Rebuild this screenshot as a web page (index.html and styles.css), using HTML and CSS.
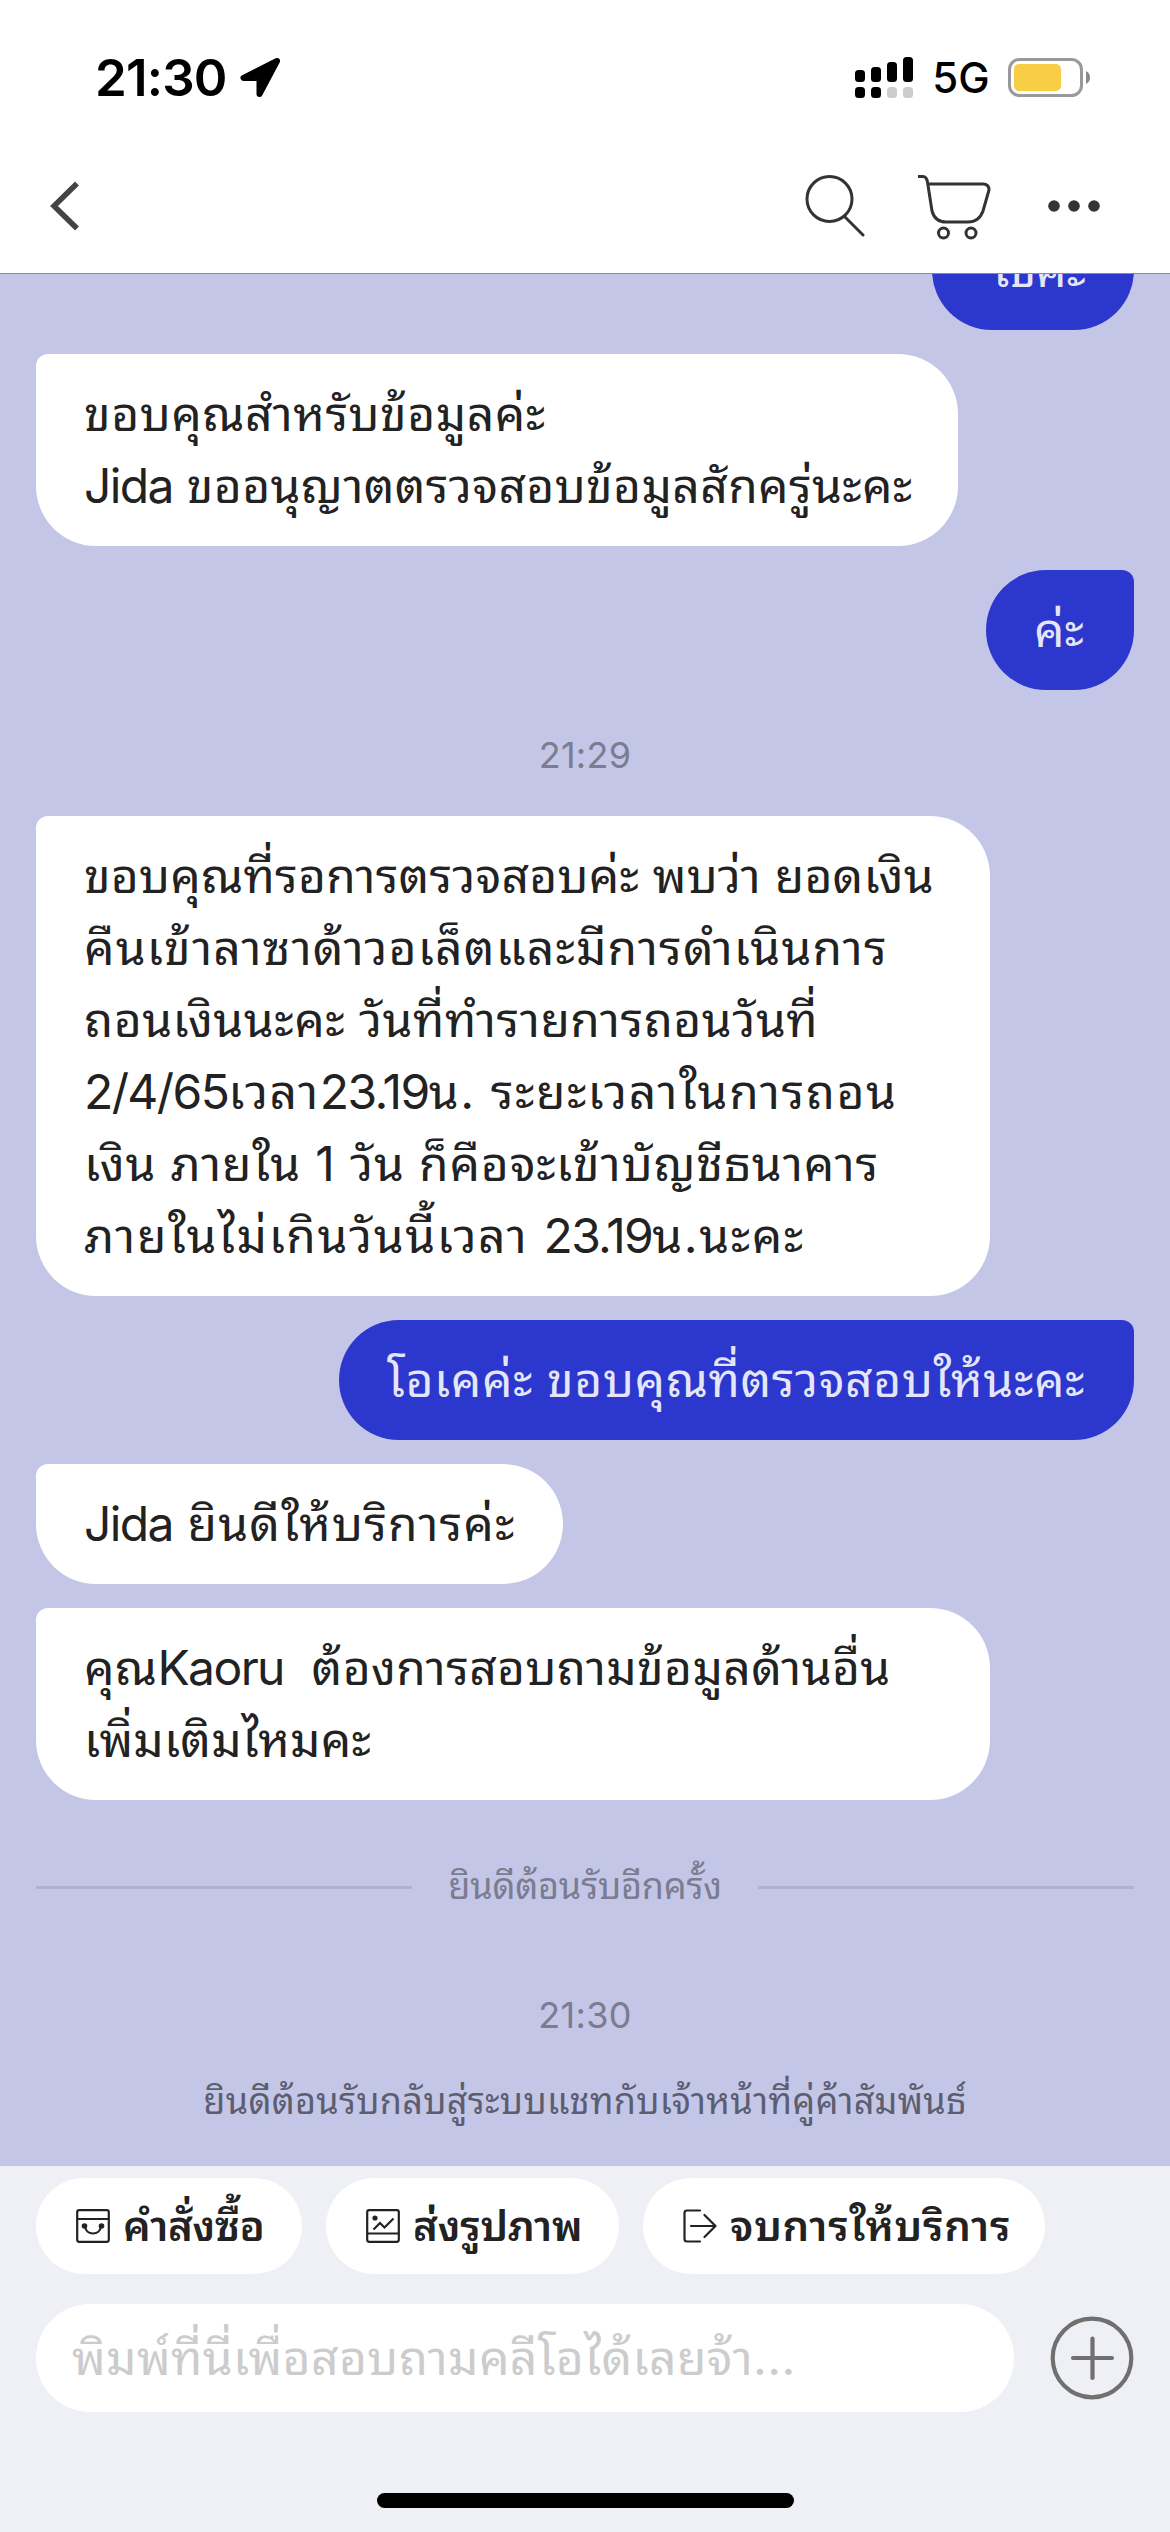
FILE: index.html
```html
<!DOCTYPE html>
<html lang="th">
<head>
<meta charset="utf-8">
<title>Chat</title>
<link rel="stylesheet" href="styles.css">
</head>
<body>
<header class="top">
  <div class="status">
    <span class="clock">21:30</span>
    <svg class="loc" width="40" height="40" viewBox="0 0 40 40"><path d="M37 3 3.500 20H19.500V36Z" stroke="#000" stroke-width="6" stroke-linejoin="round"/></svg>
    <svg class="signal" width="58" height="42" viewBox="0 0 58 42"><rect y="13" width="10" height="12" rx="3.500"/><rect x="16" y="10" width="10" height="15" rx="3.500"/><rect x="32" y="5" width="10" height="20" rx="3.500"/><rect x="48" width="10" height="25" rx="3.500"/><rect y="30" width="10" height="11" rx="3.500"/><rect x="16" y="30" width="10" height="11" rx="3.500"/><g fill="#ccc"><rect x="32" y="30" width="10" height="11" rx="3.500"/><rect x="48" y="30" width="10" height="11" rx="3.500"/></g></svg>
    <span class="net">5G</span>
    <svg class="battery" width="83" height="40" viewBox="0 0 83 40"><rect x="1.500" y="1.500" width="72" height="36" rx="10" fill="none" stroke="#999" stroke-width="3"/><rect x="6" y="6" width="47" height="27" rx="5" fill="#f7ce46"/><path d="M78 13Q82 15 82 19.500T78 26Z" fill="#8a8a8a"/></svg>
  </div>
  <nav class="bar">
    <svg class="back" width="30" height="50" viewBox="0 0 30 50"><path d="M27 2.500 4 25 27 47.500" fill="none" stroke="#444" stroke-width="5.500"/></svg>
    <svg class="search" width="60" height="62" viewBox="0 0 60 62"><g fill="none" stroke="#333" stroke-width="3" stroke-linecap="round"><circle cx="24.500" cy="24" r="22.500"/><path d="M39.500 41.500 58 60"/></g></svg>
    <svg class="cart" width="74" height="66" viewBox="0 0 74 66"><g fill="none" stroke="#333" stroke-width="3"><path d="M0 2.500H5Q8.500 2.500 9.500 8L14 37Q17 48 28 48H50Q61 48 65 37L71 16Q71 10 65 10H10"/><circle cx="25.500" cy="59" r="5"/><circle cx="53" cy="59" r="5"/></g></svg>
    <svg class="more" width="52" height="12" viewBox="0 0 52 12"><g fill="#333"><circle cx="6" cy="6" r="5.800"/><circle cx="26" cy="6" r="5.800"/><circle cx="46" cy="6" r="5.800"/></g></svg>
  </nav>
</header>
<main class="chat">
  <div class="msg me first"><span>ใช่ค่ะ</span></div>
  <div class="msg m1"><span class="t5">ขอบคุณสำหรับข้อมูลค่ะ</span><span class="t4"><b>Jida</b> ขออนุญาตตรวจสอบข้อมูลสักครู่นะคะ</span></div>
  <div class="msg me ok"><span>ค่ะ</span></div>
  <time class="time">21:29</time>
  <div class="msg wide"><span class="t2">ขอบคุณที่รอการตรวจสอบค่ะ พบว่า ยอดเงิน</span><span class="t12">คืนเข้าลาซาด้าวอเล็ตและมีการดำเนินการ</span><span class="t5">ถอนเงินนะคะ วันที่ทำรายการถอนวันที่</span><span class="t15"><b>2/4/65</b>เวลา<b>23.19</b>น. ระยะเวลาในการถอน</span><span class="t9">เงิน ภายใน 1 วัน ก็คือจะเข้าบัญชีธนาคาร</span><span class="t15">ภายในไม่เกินวันนี้เวลา <b>23.19</b>น.นะคะ</span></div>
  <div class="msg me thanks"><span class="t6">โอเคค่ะ ขอบคุณที่ตรวจสอบให้นะคะ</span></div>
  <div class="msg glad"><span class="t11"><b>Jida</b> ยินดีให้บริการค่ะ</span></div>
  <div class="msg wide"><span class="t4">คุณ<b>Kaoru</b>&nbsp; ต้องการสอบถามข้อมูลด้านอื่น</span><span class="t2">เพิ่มเติมไหมคะ</span></div>
  <div class="divider"><span>ยินดีต้อนรับอีกครั้ง</span></div>
  <time class="time late">21:30</time>
  <p class="notice">ยินดีต้อนรับกลับสู่ระบบแชทกับเจ้าหน้าที่คู่ค้าสัมพันธ์</p>
</main>
<footer class="foot">
  <div class="chips">
    <button class="chip c1"><svg width="34" height="34" viewBox="0 0 34 34"><g fill="none" stroke="#222" stroke-width="2.200"><rect x="1.200" y="1.200" width="31.600" height="31.600" rx="2"/><path d="M1 10H33M9 17C10 27 24 27 25 17" /></g><g fill="#222"><circle cx="8.500" cy="17" r="2.800"/><circle cx="25.500" cy="17" r="2.800"/></g></svg><span>คำสั่งซื้อ</span></button>
    <button class="chip c2"><svg width="34" height="34" viewBox="0 0 34 34"><g fill="none" stroke="#222" stroke-width="2.200"><rect x="1.200" y="1.200" width="31.600" height="31.600" rx="2"/><path d="M2 24.500H32M7.500 20.500 14 14 18.500 18.500 27.500 9.500"/></g><circle cx="9" cy="9" r="2.600" fill="#222"/></svg><span>ส่งรูปภาพ</span></button>
    <button class="chip c3"><svg width="34" height="34" viewBox="0 0 34 34"><path d="M17 1.500H4Q1.500 1.500 1.500 4V30Q1.500 32.500 4 32.500H17M8 17H32M21.500 6 32.500 17 21.500 28" fill="none" stroke="#222" stroke-width="2.200" stroke-linecap="round" stroke-linejoin="round"/></svg><span>จบการให้บริการ</span></button>
  </div>
  <div class="compose">
    <div class="input"><span>พิมพ์ที่นี่เพื่อสอบถามคลีโอได้เลยจ้า...</span></div>
    <svg class="plus" width="84" height="84" viewBox="0 0 84 84"><g fill="none" stroke="#707070" stroke-width="4.200" stroke-linecap="round"><circle cx="42" cy="42" r="39.300"/><path d="M23 42H62M42.500 22.500V62"/></g></svg>
  </div>
  <div class="home"></div>
</footer>
</body>
</html>
```
FILE: styles.css
```css
* { box-sizing: border-box; }
body { margin: 0; width: 1170px; height: 2532px; overflow: hidden; display: flex; flex-direction: column; background: #eff0f5; color: #222; font: 48px/72px Inter, "Noto Sans Thai Looped", "Noto Sans Thai", sans-serif; }
svg { display: block; flex: none; }
.top { height: 274px; flex: none; background: #fff; border-bottom: 1px solid #888a9e; }
.status { height: 156px; padding: 0 79px 0 95px; display: flex; align-items: center; }
.clock { font-size: 51px; font-weight: 600; color: #000; width: 146px; letter-spacing: -.8px; }
.signal { margin-left: 575px; margin-right: 19px; }
.net { font-size: 42px; font-weight: 500; color: #000; width: 76px; }
.bar { height: 100px; padding: 0 50px; display: flex; align-items: center; }
.search { margin-left: 725px; }
.cart { margin-left: 53px; margin-top: 2px; }
.more { margin-left: 56px; }
.chat { height: 1892px; flex: none; overflow: hidden; background: #c4c6e7; padding: 0 36px; display: flex; flex-direction: column; align-items: flex-start; }
.msg { flex: none; background: #fff; border-radius: 12px 60px 60px 60px; padding: 24px 48px; margin-bottom: 24px; }
.msg span { display: block; white-space: nowrap; }
.msg b { font-weight: 400; letter-spacing: -1.6px; }
.me { align-self: flex-end; background: #2b37cd; color: #e4e5f8; border-radius: 60px 12px 60px 60px; }
.first { margin-top: -64px; width: 202px; text-align: right; }
.m1 { width: 922px; }
.ok { width: 148px; }
.wide { width: 954px; }
.thanks { width: 795px; }
.glad { width: 527px; }
.t2 { letter-spacing: .2px; }
.t4 { letter-spacing: .35px; }
.t5 { letter-spacing: .5px; }
.t6 { letter-spacing: .6px; }
.t9 { letter-spacing: .85px; }
.t11 { letter-spacing: 1.15px; }
.t12 { letter-spacing: 1.17px; }
.t15 { letter-spacing: 1.58px; }
.time { align-self: center; font-size: 36px; line-height: 54px; color: #7a7c90; margin: 14px 0 34px; letter-spacing: .3px; }
.divider { width: 100%; height: 54px; font-size: 36px; line-height: 54px; color: #7a7c90; display: flex; align-items: center; margin-top: 36px; }
.divider::before, .divider::after { content: ""; flex: 1; height: 3px; background: #b0b2d0; }
.divider span { width: 346px; text-align: center; white-space: nowrap; letter-spacing: -.2px; padding-bottom: 2px; }
.late { margin: 74px 0 32px; }
.notice { margin: 0; align-self: center; font-size: 36px; line-height: 54px; color: #5c5e70; white-space: nowrap; letter-spacing: .28px; }
.foot { flex: 1; padding: 12px 36px 0; }
.chips { display: flex; gap: 24px; }
.chip { height: 96px; border: 0; border-radius: 48px; background: #fff; padding: 0 0 0 40px; display: flex; align-items: center; gap: 13px; font: 600 42px/60px Inter, "Noto Sans Thai Looped", "Noto Sans Thai", sans-serif; color: #222; white-space: nowrap; }
.c1 { width: 266px; letter-spacing: -.4px; }
.c2 { width: 293px; letter-spacing: -.3px; }
.c3 { width: 402px; letter-spacing: .7px; }
.compose { display: flex; align-items: center; margin-top: 30px; }
.input { width: 978px; height: 108px; border-radius: 54px; background: #fff; padding: 18px 36px; color: #ccc; white-space: nowrap; margin-right: 36px; letter-spacing: .35px; }
.home { width: 417px; height: 15px; border-radius: 8px; background: #000; margin: 81px auto 0; }
```
